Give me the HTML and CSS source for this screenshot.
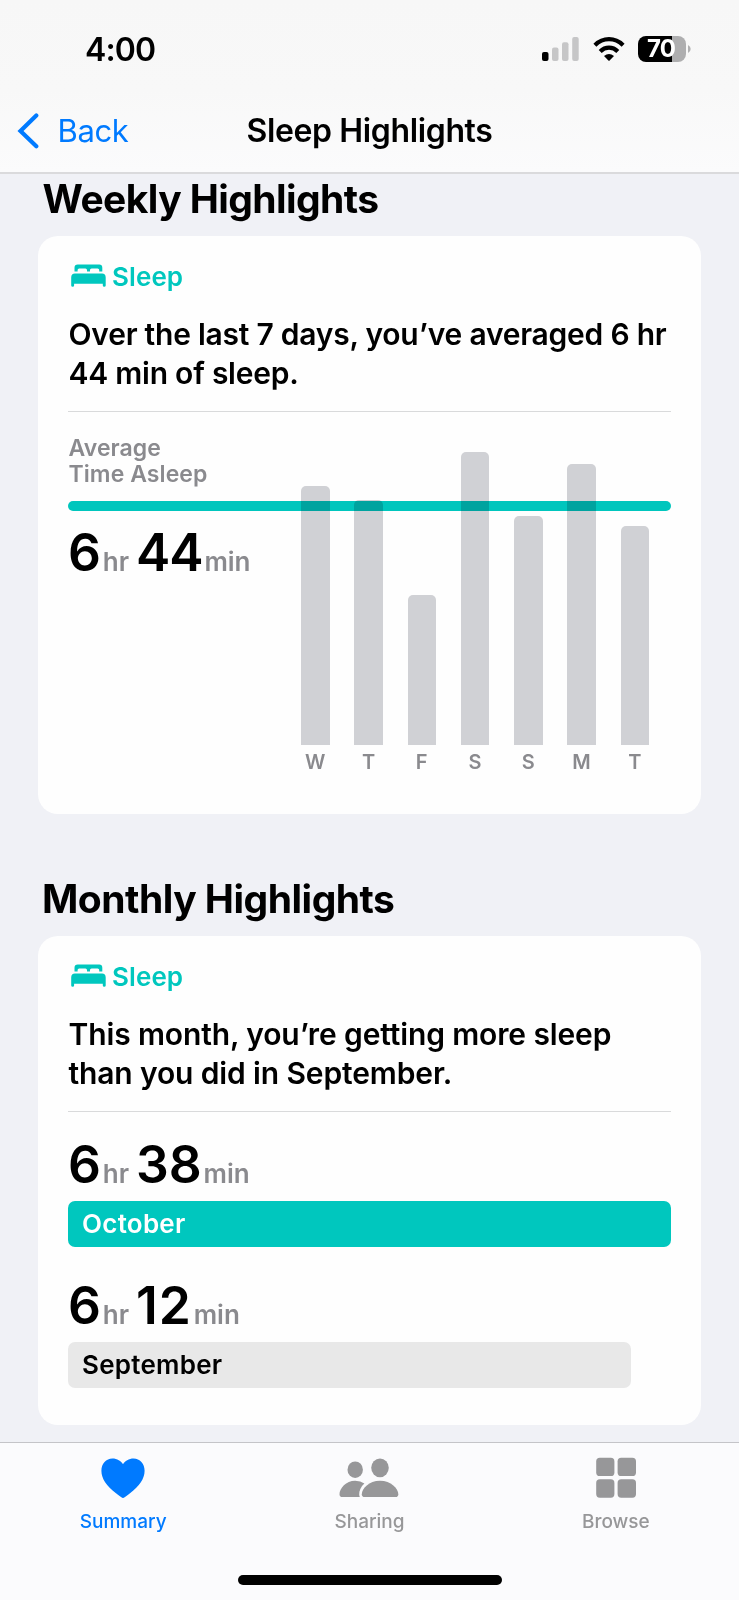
FILE: index.html
```html
<!DOCTYPE html>
<html lang="en">
<head>
<meta charset="utf-8">
<title>Sleep Highlights</title>
<link rel="stylesheet" href="styles.css">
</head>
<body>
<svg class="defs" width="0" height="0" aria-hidden="true">
  <symbol id="bed" viewBox="0 0 35 24">
    <path d="M3.5 7.5V3.8Q3.5 .6 6.8 .6H28.2Q31.3 .6 31.3 3.8V7.5H28.2V6Q28.2 4.4 26.6 4.4H20.6Q19 4.4 19 6V7.5H16V6Q16 4.4 14.4 4.4H8.2Q6.6 4.4 6.6 6V7.5Z"/>
    <path d="M.2 13.4Q.2 9.6 4 9.6H31Q34.7 9.6 34.7 13.4V21.6Q34.7 22.8 33.2 22.8Q31.8 22.8 31.8 21.6V19.8H3.1V21.6Q3.1 22.8 1.7 22.8Q.2 22.8 .2 21.6Z"/>
  </symbol>
</svg>
<header class="top">
  <div class="status">
    <span class="clock">4:00</span>
    <div class="status-icons">
      <svg class="signal" viewBox="0 0 38 25"><rect x="0" y="15" width="6.5" height="9" rx="2"/><g fill="#c6c6c7"><rect x="10" y="10.5" width="6.5" height="13.5" rx="2"/><rect x="20" y="5.3" width="6.5" height="18.7" rx="2"/><rect x="30.2" y="0" width="6.5" height="24" rx="2"/></g></svg>
      <svg class="wifi" viewBox="0 0 32 24"><g fill="none" stroke="#000" stroke-width="4.2"><path d="M1.9 8.2Q8 2.2 16 2.2T30.1 8.2"/><path d="M7.2 14.4Q11 10.6 16 10.6T24.8 14.4"/></g><path d="M11 19Q16 14.8 21 19L16.6 23.6Q16 24.1 15.4 23.6Z"/></svg>
      <div class="battery">70</div>
      <svg class="cap" viewBox="0 0 3 8"><path d="M0 0Q2.7 1.4 2.7 4T0 8Z" fill="#b0b0b1"/></svg>
    </div>
  </div>
  <nav class="nav">
    <a class="back"><svg viewBox="0 0 22 36"><path d="M19.3 2.5 3.5 17.9 19.3 33.2" fill="none" stroke="#007aff" stroke-width="4.2" stroke-linecap="round"/></svg><span>Back</span></a>
    <h1>Sleep Highlights</h1>
    <span></span>
  </nav>
</header>
<main>
  <section class="weekly">
    <h2>Weekly Highlights</h2>
    <article class="card">
      <div class="kind"><svg><use href="#bed"/></svg><span>Sleep</span></div>
      <p class="summary">Over the last 7 days, you’ve averaged 6 hr<br>44 min of sleep.</p>
      <div class="chart">
        <div class="stat">
          <div class="label">Average<br>Time Asleep</div>
          <div class="amount"><b>6</b><i class="hr">hr</i><b class="tight">44</b><i>min</i></div>
        </div>
        <div class="bars">
          <div class="day"><div class="bar" style="height:258.7px"></div><span>W</span></div>
          <div class="day"><div class="bar" style="height:245px"></div><span>T</span></div>
          <div class="day"><div class="bar" style="height:150.3px"></div><span>F</span></div>
          <div class="day"><div class="bar" style="height:293px"></div><span>S</span></div>
          <div class="day"><div class="bar" style="height:229px"></div><span>S</span></div>
          <div class="day"><div class="bar" style="height:281px"></div><span>M</span></div>
          <div class="day"><div class="bar" style="height:219.3px"></div><span>T</span></div>
        </div>
        <div class="average-line"></div>
      </div>
    </article>
  </section>
  <section class="monthly">
    <h2>Monthly Highlights</h2>
    <article class="card">
      <div class="kind"><svg><use href="#bed"/></svg><span>Sleep</span></div>
      <p class="summary">This month, you’re getting more sleep<br>than you did in September.</p>
      <div class="month">
        <div class="amount"><b>6</b><i class="hr">hr</i><b>38</b><i>min</i></div>
        <div class="month-bar current" style="width:603px">October</div>
      </div>
      <div class="month">
        <div class="amount"><b>6</b><i class="hr">hr</i><b class="loose">12</b><i>min</i></div>
        <div class="month-bar" style="width:563px">September</div>
      </div>
    </article>
  </section>
</main>
<footer class="tabs">
  <div class="tab-row">
    <a class="tab active"><svg viewBox="0 0 60 44"><path d="M30 43Q28.8 43 23 38.3C13.5 30.8 8.4 23.8 8.4 15.8C8.4 8.5 13.2 3.5 19.4 3.5C24.2 3.5 28 6.2 30 9.2C32 6.2 35.8 3.5 40.6 3.5C46.8 3.5 51.6 8.5 51.6 15.8C51.6 23.8 46.5 30.8 37 38.3Q31.2 43 30 43Z"/></svg><span>Summary</span></a>
    <a class="tab"><svg viewBox="0 0 60 44"><ellipse cx="16.2" cy="14.7" rx="7.7" ry="8.3"/><ellipse cx="41" cy="12.8" rx="8.8" ry="9.4"/><path d="M3.3 42Q.5 42 .5 39.2C.5 33.6 7 25.8 16.2 25.8Q21.7 25.8 25.4 28.6C21.8 31.8 20 36.3 20.2 39.6Q20.3 41 20.8 42Z"/><path d="M25.6 42Q22.8 42 22.8 39.2C22.8 33.8 30 25.8 41 25.8S59.3 33.8 59.3 39.2Q59.3 42 56.5 42Z"/></svg><span>Sharing</span></a>
    <a class="tab"><svg viewBox="0 0 60 44"><rect x="10.2" y="2.8" width="18.2" height="18.2" rx="3.6"/><rect x="31.6" y="2.8" width="18.4" height="18.2" rx="3.6"/><rect x="10.2" y="24.3" width="18.2" height="18.4" rx="3.6"/><rect x="31.6" y="24.3" width="18.4" height="18.4" rx="3.6"/></svg><span>Browse</span></a>
  </div>
  <div class="home"></div>
</footer>
</body>
</html>
```
FILE: styles.css
```css
* { box-sizing: border-box; }
body {
  margin: 0;
  width: 739px;
  height: 1600px;
  overflow: hidden;
  display: flex;
  flex-direction: column;
  background: #f0f1f6;
  color: #000;
  font-family: Inter, "Liberation Sans", sans-serif;
}
.defs { position: absolute; }
svg { display: block; }
h1, h2, p { margin: 0; }

.top {
  height: 174px;
  background: linear-gradient(#f7f7f7 0, #f8f8f8 90px, #fbfbfc 172px);
  border-bottom: 2px solid #dadadc;
}
.status {
  height: 99px;
  display: flex;
  justify-content: space-between;
  padding: 0 48px 0 85px;
}
.clock {
  font-size: 32px;
  font-weight: 600;
  line-height: 99px;
  letter-spacing: -0.9px;
}
.status-icons {
  display: flex;
  align-items: center;
  height: 98px;
}
.signal { width: 38px; height: 25px; margin-right: 13px; }
.wifi { width: 32px; height: 24px; margin-right: 13.5px; }
.battery {
  width: 48px;
  height: 26px;
  border-radius: 8px;
  background: linear-gradient(90deg, #000 34px, #aeaeaf 34px);
  color: #fff;
  font-size: 24px;
  font-weight: 700;
  line-height: 26px;
  letter-spacing: -0.8px;
  padding-left: 9px;
}
.cap { width: 3px; height: 8px; margin-left: 2px; }
.nav {
  height: 64px;
  display: grid;
  grid-template-columns: 1fr auto 1fr;
  align-items: center;
}
.nav h1 { font-size: 32px; font-weight: 600; line-height: 40px; letter-spacing: -0.37px; }
.back {
  display: flex;
  align-items: center;
  gap: 19px;
  padding-left: 16.5px;
  color: #007aff;
  font-size: 31px;
  line-height: 40px;
  letter-spacing: -0.35px;
}
.back svg { width: 22px; height: 36px; }

main { padding: 0 38px; height: 1268px; }
h2 {
  font-size: 39px;
  font-weight: 700;
  line-height: 50px;
  padding-left: 4.5px;
  letter-spacing: -0.58px;
}
.weekly h2 { height: 62px; }
.monthly { padding-top: 60px; }
.monthly h2 { height: 62px; padding-left: 4px; letter-spacing: -0.5px; }
.card {
  width: 663px;
  padding: 26px 30px 0;
  border-radius: 20px;
  background: #fefefe;
}
.weekly .card { height: 578px; }
.monthly .card { height: 489px; }
.kind {
  display: flex;
  align-items: center;
  gap: 6px;
  height: 28px;
  padding-left: 3px;
  color: #00c7be;
  font-size: 26px;
  font-weight: 580;
  letter-spacing: 0.1px;
}
.kind svg { width: 35px; height: 24px; fill: #00c7be; }
.summary {
  margin-top: 24px;
  height: 98px;
  padding: 0.6px 0 0 0.5px;
  border-bottom: 1px solid #d9dadb;
  font-size: 30px;
  font-weight: 600;
  line-height: 39.8px;
  letter-spacing: -0.24px;
  white-space: nowrap;
}
.monthly .summary { letter-spacing: -0.13px; }
.chart {
  display: flex;
  position: relative;
  height: 366px;
}
.stat { width: 233px; padding-top: 22.5px; }
.label {
  padding-left: 0.5px;
  color: #8a8a8e;
  font-size: 23px;
  font-weight: 600;
  line-height: 26.5px;
  letter-spacing: 0.08px;
}
.amount {
  display: flex;
  align-items: baseline;
  height: 60px;
  line-height: 60px;
  white-space: nowrap;
}
.stat .amount { margin-top: 34.5px; }
.amount b { font-size: 51.5px; font-weight: 560; }
.amount .tight { letter-spacing: -1px; }
.amount .loose { letter-spacing: 1px; }
.amount i {
  margin-left: 1.8px;
  color: #8a8a8e;
  font-size: 26px;
  font-style: normal;
  font-weight: 560;
}
.amount .hr { margin-right: 7px; }
.bars { display: flex; gap: 24.75px; }
.day {
  width: 28.5px;
  height: 362px;
  display: flex;
  flex-direction: column;
  justify-content: flex-end;
  align-items: center;
}
.bar {
  width: 28.5px;
  border-radius: 5px 5px 0 0;
  background: #d0d1d5;
}
.day span {
  height: 29px;
  color: #8a8a8e;
  font-size: 20px;
  font-weight: 600;
  line-height: 35px;
}
.average-line {
  position: absolute;
  left: 0;
  top: 89px;
  width: 603px;
  height: 10px;
  border-radius: 5px;
  background: #00c7be;
  mix-blend-mode: multiply;
}
.month { padding-top: 22px; height: 141px; }
.month .amount { height: 67px; }
.month-bar {
  height: 46px;
  padding-left: 14px;
  border-radius: 7px;
  background: #e8e8e8;
  font-size: 26px;
  font-weight: 600;
  line-height: 46px;
  letter-spacing: 0.25px;
}
.month-bar.current { background: #00c7be; color: #fff; }

.tabs {
  height: 158px;
  border-top: 1px solid #c4c4c8;
  background: #fbfbfd;
}
.tab-row { display: grid; grid-template-columns: repeat(3, 1fr); height: 132px; }
.tab {
  display: flex;
  flex-direction: column;
  align-items: center;
  padding-top: 12px;
  color: #979799;
  fill: #979799;
  font-size: 19px;
  font-weight: 500;
  line-height: 24px;
}
.tab svg { width: 60px; height: 44px; margin-bottom: 11px; }
.tab.active { color: #007aff; fill: #007aff; }
.home { width: 264px; height: 10px; margin: 0 auto; border-radius: 5px; background: #000; }
```
